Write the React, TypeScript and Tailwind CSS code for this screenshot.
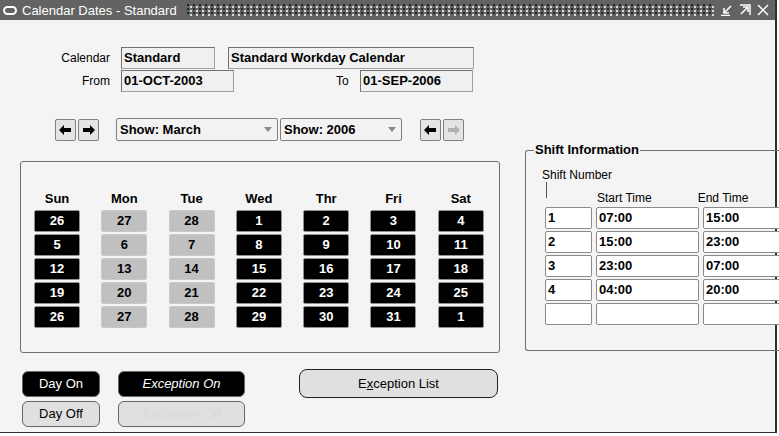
import React from "react";

const F = { fontFamily: '"Liberation Sans", Arial, sans-serif' };

const Field = ({ w, v, className = "" }: { w: string; v?: string; className?: string }) => (
  <div className={`h-[22px] ${w} border border-[#a0a0a0] border-t-[#707070] border-l-[#707070] bg-[#f0f0f0] px-[2px] text-[13px] font-bold leading-[20px] text-black ${className}`}>{v}</div>
);

const WField = ({ w, v }: { w: string; v?: string }) => (
  <div className={`h-[22px] ${w} shrink-0 rounded-[2px] border border-[#8a8a8a] bg-white px-[2px] text-[13px] font-bold leading-[20px] text-black`}>{v}</div>
);

const Arrow = ({ dir, disabled }: { dir: "l" | "r"; disabled?: boolean }) => (
  <div className="flex h-[22px] w-[21px] items-center justify-center rounded-[2px] border border-[#808080] bg-[#e4e4e4]">
    <svg width="13" height="10" viewBox="0 0 13 10">
      <path d={dir === "l" ? "M0 5 L5 0 L5 3 L12 3 L12 7 L5 7 L5 10 Z" : "M13 5 L8 0 L8 3 L1 3 L1 7 L8 7 L8 10 Z"} fill={disabled ? "#b0b0b0" : "#000"} />
    </svg>
  </div>
);

const Select = ({ w, v }: { w: string; v: string }) => (
  <div className={`flex h-[23px] ${w} items-center justify-between rounded-[2px] border border-[#808080] bg-[#f2f2f2] pl-[3px] pr-[5px] text-[13px] font-bold`}>
    <span>{v}</span>
    <svg width="8" height="5" viewBox="0 0 8 5"><path d="M0 0 H8 L4 5 Z" fill="#888" /></svg>
  </div>
);

const weeks = [
  [26, 27, 28, 1, 2, 3, 4],
  [5, 6, 7, 8, 9, 10, 11],
  [12, 13, 14, 15, 16, 17, 18],
  [19, 20, 21, 22, 23, 24, 25],
  [26, 27, 28, 29, 30, 31, 1],
];
const days = ["Sun", "Mon", "Tue", "Wed", "Thr", "Fri", "Sat"];

export default function App() {
  return (
    <div style={F} className="relative h-[436px] w-[779px] overflow-hidden bg-white text-black">
      <div className="flex h-[433px] w-[777px] flex-col border-r-2 border-b border-[#303030] bg-[#f4f4f4]">
        {/* title bar */}
        <div className="flex h-[20px] items-center bg-[#636363] pl-[3px] pr-[6px] text-white">
          <div className="mr-[5px] h-[9px] w-[14px] rounded-full border-[2px] border-white" />
          <span className="text-[13px] leading-none">Calendar Dates - Standard</span>
          <div className="ml-[10px] mr-[6px] h-[12px] flex-1" style={{ backgroundImage: "radial-gradient(circle at 1px 1px, #222 0.7px, transparent 1px), radial-gradient(circle at 4px 3px, #ddd 0.7px, transparent 1px)", backgroundSize: "6px 4px" }} />
          <div className="flex items-center gap-[6px]">
            <svg width="12" height="12" viewBox="0 0 12 12" stroke="white" strokeWidth="1.5" fill="none"><path d="M10 2 L3 9 M3 4 V9 H8 M0 11.5 H9" /></svg>
            <svg width="12" height="12" viewBox="0 0 12 12" stroke="white" strokeWidth="1.5" fill="none"><path d="M1 1 H11 V11 M2 10 L9 3 M4 3 H9 V8" /></svg>
            <svg width="12" height="12" viewBox="0 0 12 12" stroke="white" strokeWidth="1.5" fill="none"><path d="M1 1 L11 11 M11 1 L1 11" /></svg>
          </div>
        </div>

        <div className="relative flex-1">
          {/* header fields */}
          <div className="ml-[58px] mt-[27px] flex flex-col gap-[1px] text-[12px]">
            <div className="flex items-center">
              <span className="w-[52px] text-right">Calendar</span>
              <Field w="w-[94px]" v="Standard" className="ml-[11px]" />
              <Field w="w-[246px]" v="Standard Workday Calendar" className="ml-[13px]" />
            </div>
            <div className="flex items-center">
              <span className="w-[52px] text-right">From</span>
              <Field w="w-[113px]" v="01-OCT-2003" className="ml-[11px]" />
              <span className="ml-[102px] w-[16px]">To</span>
              <Field w="w-[113px]" v="01-SEP-2006" className="ml-[8px]" />
            </div>
          </div>

          {/* nav row */}
          <div className="ml-[55px] mt-[26px] flex items-center">
            <Arrow dir="l" />
            <div className="ml-[2px]"><Arrow dir="r" /></div>
            <div className="ml-[17px]"><Select w="w-[162px]" v="Show: March" /></div>
            <div className="ml-[2px]"><Select w="w-[122px]" v="Show: 2006" /></div>
            <div className="ml-[18px]"><Arrow dir="l" /></div>
            <div className="ml-[2px]"><Arrow dir="r" disabled /></div>
          </div>

          <div className="flex">
            {/* calendar box */}
            <div className="ml-[20px] mt-[20px] h-[192px] w-[480px] shrink-0 rounded-[3px] border border-[#707070] pl-[13px] pt-[27px]">
              <div className="grid grid-cols-[repeat(7,46px)] gap-x-[21.3px]">
                {days.map((d) => (
                  <div key={d} className="text-center text-[13px] font-bold leading-[20px]">{d}</div>
                ))}
              </div>
              <div className="mt-[1px] flex flex-col gap-[2px]">
                {weeks.map((w, i) => (
                  <div key={i} className="grid grid-cols-[repeat(7,46px)] gap-x-[21.3px]">
                    {w.map((n, j) => {
                      const off = j === 1 || j === 2;
                      return (
                        <div key={j} className={`h-[22px] rounded-[2px] border text-center text-[13px] font-bold leading-[20px] ${off ? "border-[#c8c8c8] bg-[#c0c0c0] text-black" : "border-[#909090] bg-black text-white"}`}>{n}</div>
                      );
                    })}
                  </div>
                ))}
              </div>
            </div>

            {/* shift info */}
            <div className="relative ml-[25px] mt-[9px] h-[201px] w-[260px] shrink-0 rounded-l-[3px] border border-r-0 border-[#707070]">
              <span className="absolute left-[8px] top-[-8px] bg-[#f4f4f4] px-[1px] text-[13px] font-bold leading-[14px]">Shift Information</span>
              <div className="ml-[16px] mt-[17px] text-[12px] leading-[14px]">Shift Number</div>
              <div className="relative flex">
                <div className="ml-[20px] h-[16px] w-px bg-[#555]" />
                <span className="ml-[50px] mt-[9px] text-[12px] leading-[14px]">Start Time</span>
                <span className="ml-[46px] mt-[9px] text-[12px] leading-[14px]">End Time</span>
              </div>
              <div className="mt-[2px] ml-[19px] flex flex-col gap-[2px]">
                {[["1", "07:00", "15:00"], ["2", "15:00", "23:00"], ["3", "23:00", "07:00"], ["4", "04:00", "20:00"], ["", "", ""]].map((r, i) => (
                  <div key={i} className="flex gap-[4px]">
                    <WField w="w-[47px]" v={r[0]} />
                    <WField w="w-[103px]" v={r[1]} />
                    <WField w="w-[100px]" v={r[2]} />
                  </div>
                ))}
              </div>
            </div>
          </div>

          {/* buttons */}
          <div className="ml-[22px] mt-[18px] flex text-[13px]">
            <div className="flex flex-col gap-[4px]">
              <div className="flex h-[26px] w-[78px] items-center justify-center rounded-[6px] border border-[#666] bg-black text-white">Day On</div>
              <div className="flex h-[26px] w-[78px] items-center justify-center rounded-[6px] border border-[#666] bg-[#e0e0e0]">Day Off</div>
            </div>
            <div className="ml-[18px] flex flex-col gap-[4px]">
              <div className="flex h-[26px] w-[127px] items-center justify-center rounded-[6px] border border-[#666] bg-black italic text-white">Exception On</div>
              <div className="flex h-[26px] w-[127px] items-center justify-center rounded-[6px] border border-[#666] bg-[#e0e0e0] italic text-[#dadada]">Exception Off</div>
            </div>
            <div className="ml-[54px] -mt-[2px] flex h-[29px] w-[199px] items-center justify-center rounded-[8px] border-[1.5px] border-[#222] bg-[#e0e0e0]">
              E<span className="underline">x</span>ception List
            </div>
          </div>
        </div>
      </div>
    </div>
  );
}
